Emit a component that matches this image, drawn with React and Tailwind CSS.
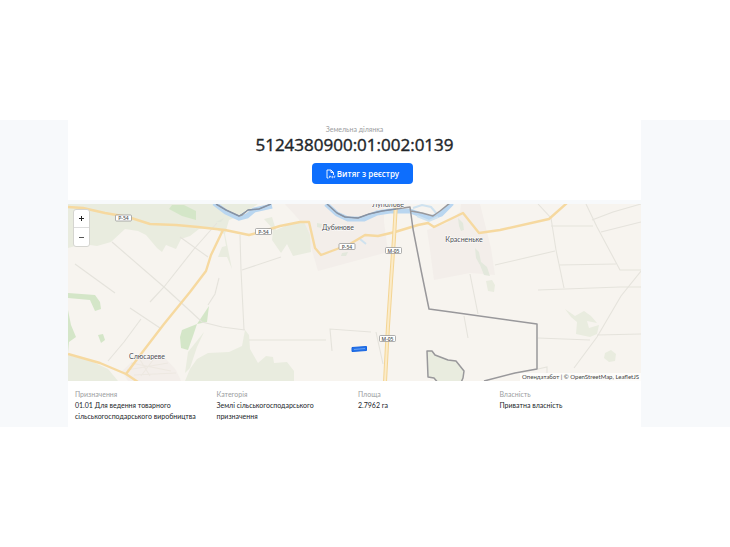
const details = [
  { label: 'Призначення', value: '01.01 Для ведення товарного сільськогосподарського виробництва' },
  { label: 'Категорія', value: 'Землі сільськогосподарського призначення' },
  { label: 'Площа', value: '2.7962 га' },
  { label: 'Власність', value: 'Приватна власність' },
];

const shields = [
  { x: 123.5, y: 218, text: 'Р-54' },
  { x: 263.5, y: 231.5, text: 'Р-54' },
  { x: 347, y: 246.5, text: 'Р-54' },
  { x: 393.5, y: 250.5, text: 'М-05' },
  { x: 387.5, y: 338.5, text: 'М-05' },
];

function MapDrawing() {
  return (
    <svg
      className="block h-full w-full"
      viewBox="68 204 573 177"
      preserveAspectRatio="xMidYMid slice"
      role="img"
      aria-label="Карта земельної ділянки"
    >
      <rect x="68" y="204" width="573" height="177" fill="#f7f4ef" />

      <g fill="#e9ecdf">
        <path d="M68 204H258L240 216L229 220L225 234L232 269L227 257L218 257L222 247L226 246L224 234L214 228L199 229L190 236L181 239L176 249L166 245L162 252L157 248L146 235L138 231L125 229L111 242L97 246L83 244L68 248Z" />
        <path d="M68 355L91 361L108 369L118 381H68Z" />
        <path d="M185 381L190 369L197 359L208 353L229 352L242 346L245 330L249 335L250 349L258 363L266 356L273 357L274 363L287 362L294 371L294 381Z" />
        <path d="M486 281L492 280L495 285L494 292L488 291Z" />
        <path d="M565 309L575 316L584 311L591 316L597 323L587 321L589 328L599 325L597 334L590 337L576 334L577 322L571 317Z" />
        <path d="M605 353L611 350L616 354L615 361L609 362L604 358Z" />
        <path d="M204 332L197 347L190 368L185 373L188 352Z" />
      </g>
      <g fill="#d4e6c8">
        <path d="M172 205L184 205L196 211L196 220L182 216L169 209Z" />
        <path d="M68 293L95 295L100 302L101 309L95 311L90 300L68 298Z" />
        <path d="M68 310L71 325L76 337L69 342L68 353Z" />
        <path d="M98 335L103 334L105 340L101 343Z" />
        <path d="M182 330L197 324L193 336L188 350L181 348L180 337Z" />
        <path d="M209 306L207 322L197 324Z" />
      </g>

      <g fill="#f3eeea">
        <path d="M285 204H384L384 222L388 252L318 271L311 247L304 225Z" />
        <path d="M427 230L447 223L460 212L461 204H480L491 248L495 275L470 273L434 280L430 250Z" />
        <path d="M131 363L149 355L165 358L176 370L181 381H128L122 371Z" />
      </g>
      <path d="M264 219L272 217L276 230L290 224L304 222L310 235L311 252L293 256L287 244L281 253L272 240L273 229Z" fill="#e9ecdf" />
      <g fill="#e3e8dc">
        <path d="M317 223L322 224L321 228L317 227ZM342 253L348 252L346 256L341 256Z" />
        <path d="M458 218L463 223L464 230L461 231L459 226ZM475 248L479 252L481 262L487 267L490 276L484 275L480 265L476 258Z" />
        <path d="M216 222L224 218L221 222Z" />
      </g>

      <g fill="none" stroke="#e5e3dc" strokeWidth="1.1">
        <path d="M112 242L164 287L188 309L202 322L222 327L245 330" />
        <path d="M217 223L194 249L164 287L150 302M141 319L124 342L108 361" />
        <path d="M180 237L208 257M75 264L115 293M130 308L160 328" />
        <path d="M219 278L215 294L208 305M240 235L241 270L244 330" />
        <path d="M242 270L281 257M249 340H326M332 351L330 329L371 332M376 332L383 364" />
        <path d="M131 363L171 371M139 358L150 376M156 356L141 376M127 370L168 363M134 375L176 373" stroke="#ede8e1" />
        <path d="M470 274L478 314M464 316L468 338M495 265L555 251" />
        <path d="M538 204L551 218L556 250L564 288M551 226H593M559 265L616 264" />
        <path d="M586 204L597 227L620 270H641M601 232L641 222M538 290L620 287H641M592 220L613 212L641 204" />
        <path d="M641 271L621 296L597 337L574 368M597 335L641 334M538 338L590 340M538 369L547 367V373" />
      </g>

      <path d="M214 203L226 212L239 218L247 216L254 210L272 206M326 204L337 214L348 219L364 219L377 213L390 211L410 211L430 218L441 214L452 203" fill="none" stroke="#b9d6f0" strokeWidth="5" />
      <path d="M413 208L422 205L431 207L437 214M417 216L429 221L438 217M360 239L366 244" fill="none" stroke="#cfe2ef" strokeWidth="2" />

      <g fill="none" stroke="#f6d9a0" strokeWidth="2.4" strokeLinejoin="round">
        <path d="M68 207L83 208L105 213L128 217L150 224L176 225L198 227L225 230L249 235L264 231L280 226L300 222L309 222L315 248L321 255L329 252L337 249L350 244L365 235L378 236L395 232L418 225L428 223L434 227L463 213L479 233L500 230L549 219L567 203" />
        <path d="M223 230L211 255L206 271L190 292L164 324L141 354L126 374M68 354L100 363L126 374L138 382" />
      </g>
      <path d="M396 203L394 238L391 281L388 326L385 382" fill="none" stroke="#f4d594" strokeWidth="4" />
      <path d="M396 203L394 238L391 281L388 326L385 382" fill="none" stroke="#fbebc8" strokeWidth="2" />

      <g fill="none" stroke="#99989b" strokeWidth="1.5" strokeLinejoin="round">
        <path d="M216 204L226 210L239 216L242 215L248 210L259 209L271 204M327 204L337 213L345 217L358 218L369 214L382 211L396 209L410 207L413 229L421 270L429 309L451 312L537 324V369L515 373L484 381M411 211L422 213L433 216L440 211L450 203" />
        <path d="M427 351H432L435 355L448 360L456 361L464 371L463 378L460 385H440L434 378L428 377Z" fill="#e9ecdf" />
      </g>
      <path d="M216 204L226 210L239 216L248 210L259 209L271 204M327 204L337 213L345 217L358 218L369 214L382 211L396 209" fill="none" stroke="#7f92ab" strokeWidth="1" />

      <path d="M352 347.5L366.500 346.500V350.500L352 351.500Z" fill="#2673e8" stroke="#1463e2" />
      <path d="M354 349.500L365 348.500" stroke="#68a1f2" strokeWidth="1" />

      <g className="font-[Lato,Roboto,sans-serif]" fill="#4b4b4f" fontSize="7" textAnchor="middle" stroke="#fff" strokeWidth="1" paintOrder="stroke">
        <text x="388" y="207">Луполове</text>
        <text x="338" y="230">Дубинове</text>
        <text x="464" y="242">Красненьке</text>
        <text x="147" y="359">Слюсареве</text>
      </g>
      {shields.map(({ x, y, text }) => (
        <g key={`${x}-${y}`}>
          <rect x={x - 8} y={y - 3} width="16" height="6" rx="1" fill="#fff" stroke="#8e8e8e" strokeWidth="0.700" />
          <text x={x} y={y + 2} fontSize="5" fontWeight="600" textAnchor="middle" fill="#555">{text}</text>
        </g>
      ))}
    </svg>
  );
}

function PdfIcon() {
  return (
    <svg className="h-[10px] w-[10px]" viewBox="0 0 10 10" fill="none" stroke="currentColor" aria-hidden="true">
      <path d="M2.500 9H1V1H5L7.500 3.500V6M5 1V3.500H7.500" strokeWidth="0.900" />
      <path d="M3.500 9V7H4.500V8H3.500M6 7V9H6.500L7 8L6.500 7ZM8.300 9V7H9.500M8.300 8H9.200" strokeWidth="0.600" />
    </svg>
  );
}

export default function App() {
  return (
    <div className="bg-white py-[120px] font-['Open_Sans','Noto_Sans',sans-serif] text-[#212529]">
      <div className="bg-[#f7f9fb] pr-[89px] pl-[68px]">
        <header className="flex flex-col items-center bg-white pt-1 pb-4">
          <p className="font-[Lato,Roboto,sans-serif] text-[7px] leading-[10px] text-[#9b9da0]">Земельна ділянка</p>
          <h1 className="text-[17px] leading-[21px] font-medium [-webkit-text-stroke:0.4px_#212529]">5124380900:01:002:0139</h1>
          <button type="button" className="mt-2 ml-4 flex h-[21px] items-center gap-px rounded bg-[#0d6efd] px-[14px] text-[8px] font-semibold text-white">
            <PdfIcon />
            Витяг з реєстру
          </button>
        </header>
        <section className="relative mt-1 h-[177px] overflow-hidden">
          <MapDrawing />
          <div className="absolute top-[5px] left-[5px] flex w-[17px] flex-col overflow-hidden rounded-[3px] border border-[#d5d5d0] bg-white">
            <button type="button" aria-label="Збільшити" className="flex h-[18px] items-center justify-center border-b border-[#ddd]">
              <svg className="h-[7px] w-[7px]" viewBox="0 0 7 7" stroke="#222" strokeWidth="1"><path d="M1 3.500H6M3.500 1V6" /></svg>
            </button>
            <button type="button" aria-label="Зменшити" className="flex h-[18px] items-center justify-center">
              <svg className="h-[7px] w-[7px]" viewBox="0 0 7 7" stroke="#555" strokeWidth="1"><path d="M1 3.500H6" /></svg>
            </button>
          </div>
          <p className="absolute right-0 bottom-0 bg-white/70 px-[2px] font-[Lato,Roboto,sans-serif] text-[6px] leading-[8px] text-[#444]">
            <a href="#opendatabot">Опендатабот</a> | © <a href="#osm">OpenStreetMap</a>, <a href="#leaflet">LeafletJS</a>
          </p>
        </section>
        <dl className="grid grid-cols-4 bg-white pt-2 pb-[5px] pl-[7px] font-[Lato,Roboto,sans-serif] text-[7px] leading-[11px]">
          {details.map(({ label, value }) => (
            <div key={label} className="pr-2">
              <dt className="text-[#9b9da0]">{label}</dt>
              <dd>{value}</dd>
            </div>
          ))}
        </dl>
      </div>
    </div>
  );
}
